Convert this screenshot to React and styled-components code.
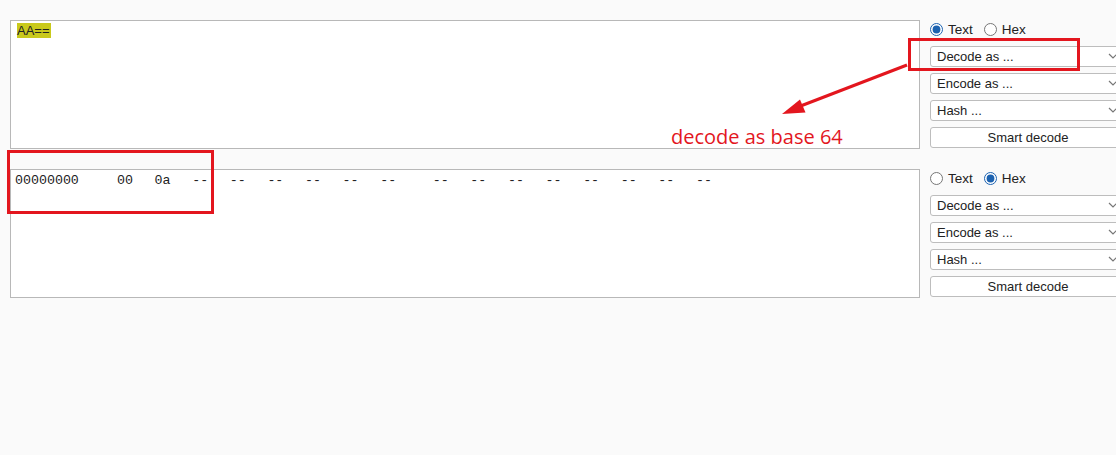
import React from 'react'
import styled, { createGlobalStyle } from 'styled-components'

const GlobalStyle = createGlobalStyle`
  html, body {
    margin: 0;
    background: #fafafa;
    font-family: "Liberation Sans", Arial, sans-serif;
  }
`

const Page = styled.div`
  position: relative;
  height: 455px;
  overflow: hidden;
  padding: 20px 0 0 10px;
  box-sizing: border-box;
  display: flex;
  flex-direction: column;
  gap: 20px;
`

const Panel = styled.div`
  display: flex;
  gap: 10px;
  height: 129px;
`

const Editor = styled.div`
  box-sizing: border-box;
  width: 910px;
  flex-shrink: 0;
  background: #fff;
  border: 1px solid #b8b8b8;
  padding: ${ p => p.hex ? '3px 4px' : '2px 6px' };
  font-size: 13px;
  line-height: 16px;
  color: #222;
`

const Mark = styled.span`
  display: inline-block;
  background: #c9c91c;
  line-height: 15px;
  padding-right: 1px;
`

const HexRow = styled.div`
  display: grid;
  grid-template-columns: 102px repeat(8, 37.6px) 15px repeat(8, 37.6px);
  font-family: "Liberation Mono", "DejaVu Sans Mono", monospace;
  font-size: 13.3px;
  line-height: 16px;
  color: #222;
  white-space: pre;
`

const Side = styled.div`
  width: 196px;
  flex-shrink: 0;
  display: flex;
  flex-direction: column;
  gap: 6px;
`

const RadioRow = styled.div`
  height: 18px;
  margin-bottom: 2px;
  display: flex;
  align-items: center;
  gap: 11px;
  font-size: 13.5px;
  color: #222;
`

const RadioLabel = styled.label`
  display: flex;
  align-items: center;
  gap: 5px;
`

const Radio = styled.input`
  margin: 0;
  width: 13px;
  height: 13px;
  accent-color: #1c62b0;
`

const SelectWrap = styled.div`
  position: relative;
  width: 196px;
  height: 21px;
`

const Select = styled.select`
  appearance: none;
  box-sizing: border-box;
  width: 100%;
  height: 100%;
  margin: 0;
  padding: 0 0 0 6px;
  border: 1px solid #bdbdbd;
  border-radius: 3px;
  background: #fff;
  font-family: "Liberation Sans", Arial, sans-serif;
  font-size: 13px;
  color: #222;
`

const Chevron = styled.svg`
  position: absolute;
  right: 8px;
  top: 7px;
  pointer-events: none;
`

const Button = styled.button`
  box-sizing: border-box;
  width: 196px;
  height: 21px;
  margin: 0;
  padding: 0;
  border: 1px solid #bdbdbd;
  border-radius: 3px;
  background: #fff;
  font-family: "Liberation Sans", Arial, sans-serif;
  font-size: 13px;
  color: #222;
`

const Callout = styled.div`
  position: absolute;
  box-sizing: border-box;
  border: 3px solid #e3161e;
  left: ${ p => p.x }px;
  top: ${ p => p.y }px;
  width: ${ p => p.w }px;
  height: ${ p => p.h }px;
`

const Note = styled.div`
  position: absolute;
  left: 671px;
  top: 124px;
  font-family: "Open Sans", sans-serif;
  font-size: 20px;
  line-height: 26px;
  color: #e3161e;
`

const Overlay = styled.svg`
  position: absolute;
  left: 0;
  top: 0;
  pointer-events: none;
`

const cells = ['00', '0a', '--', '--', '--', '--', '--', '--', '', '--', '--', '--', '--', '--', '--', '--', '--']

const Dropdown = ({ label }) => <SelectWrap>
    <Select><option>{ label }</option></Select>
    <Chevron width='10' height='7' viewBox='0 0 10 7'>
      <path d='M1 1 L5 5 L9 1' fill='none' stroke='#777' strokeWidth='1.2' />
    </Chevron>
  </SelectWrap>

const Controls = ({ mode, name }) => <Side>
    <RadioRow>
      <RadioLabel>
        <Radio type='radio' name={ name } defaultChecked={ mode === 'text' } /> Text
      </RadioLabel>
      <RadioLabel>
        <Radio type='radio' name={ name } defaultChecked={ mode === 'hex' } /> Hex
      </RadioLabel>
    </RadioRow>
    <Dropdown label='Decode as ...' />
    <Dropdown label='Encode as ...' />
    <Dropdown label='Hash ...' />
    <Button>Smart decode</Button>
  </Side>

const App = () => <>
    <GlobalStyle />
    <Page>
      <Panel>
        <Editor><Mark>AA==</Mark></Editor>
        <Controls mode='text' name='top' />
      </Panel>
      <Panel>
        <Editor hex>
          <HexRow>
            <span>00000000</span>
            { cells.map((c, i) => <span key={ i }>{ c }</span>) }
          </HexRow>
        </Editor>
        <Controls mode='hex' name='bottom' />
      </Panel>
      <Callout x={ 908 } y={ 38 } w={ 172 } h={ 33 } />
      <Callout x={ 7 } y={ 150 } w={ 207 } h={ 64 } />
      <Note>decode as base 64</Note>
      <Overlay width='1116' height='455'>
        <line x1='907' y1='65' x2='798' y2='107' stroke='#e3161e' strokeWidth='3' />
        <polygon points='782,114 800,99.5 805.5,112.5' fill='#e3161e' />
      </Overlay>
    </Page>
  </>

export default App
